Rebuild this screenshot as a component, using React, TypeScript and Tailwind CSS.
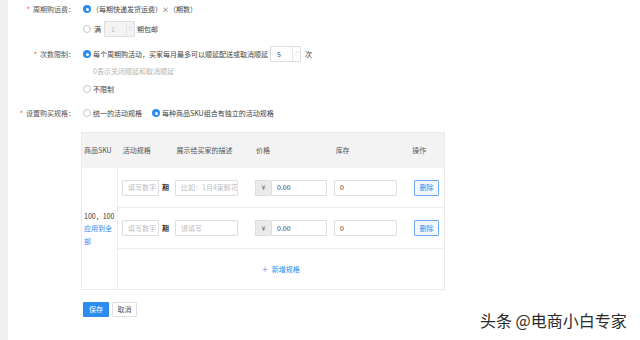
import React from 'react';

const FONT = "font-['Noto_Sans_CJK_SC','Noto_Sans',sans-serif]";

const Radio: React.FC<{ checked?: boolean }> = ({ checked }) =>
    checked ? (
        <span className="w-[8px] h-[8px] rounded-full bg-[#2d8cf0] flex items-center justify-center shrink-0">
            <span className="w-[3px] h-[3px] rounded-full bg-white" />
        </span>
    ) : (
        <span className="w-[8px] h-[8px] rounded-full border border-[#c8c8c8] bg-white shrink-0" />
    );

const NumberInput: React.FC<{ value: string; disabled?: boolean }> = ({ value, disabled }) => (
    <div className={`w-[31px] h-[16px] border border-[#dcdee2] rounded-[1px] flex items-stretch ${disabled ? 'bg-[#f3f3f3]' : 'bg-white'}`}>
        <span className={`flex-1 pl-[6px] flex items-center ${disabled ? 'text-[#bbb]' : 'text-[#444]'}`}>{value}</span>
        <span className="w-[8px] border-l border-[#e6e6e6] flex flex-col items-center justify-center text-[#bbb] leading-none">
            <span className="text-[4px] leading-[5px]">︿</span>
            <span className="text-[4px] leading-[5px]">﹀</span>
        </span>
    </div>
);

const TextInput: React.FC<{ w: string; placeholder?: string; value?: string }> = ({ w, placeholder, value }) => (
    <div className={`${w} h-[16px] border border-[#dcdee2] rounded-[1px] bg-white flex items-center px-[5px] overflow-hidden whitespace-nowrap`}>
        {value ? <span className="text-[#333]">{value}</span> : <span className="text-[#bdbdbd]">{placeholder}</span>}
    </div>
);

const Label: React.FC<{ text?: string }> = ({ text }) => (
    <div className="w-[73px] pr-[6px] flex justify-end items-center shrink-0 text-[#555]">
        {text && (
            <>
                <span className="text-[#ed4014] mr-[3px]">*</span>
                {text}：
            </>
        )}
    </div>
);

const SpecRow: React.FC<{ desc: string; last?: boolean }> = ({ desc, last }) => (
    <div className={`flex items-center ${last ? 'h-[41px] border-b border-[#ececec]' : 'h-[40px] border-b border-[#ececec]'}`}>
        <div className="w-[54px] pl-[4px] flex items-center gap-[3px]">
            <TextInput w="w-[37px]" placeholder="填写数字" />
            <span className="font-bold text-[#333]">期</span>
        </div>
        <div className="w-[80px] pl-[3px]">
            <TextInput w="w-[63px]" placeholder={desc} />
        </div>
        <div className="w-[80px] pl-[3px] flex">
            <span className="w-[16px] h-[16px] bg-[#ebebeb] border border-[#dcdee2] border-r-0 flex items-center justify-center text-[#666]">¥</span>
            <TextInput w="w-[56px]" value="0.00" />
        </div>
        <div className="w-[78px] pl-[2px]">
            <TextInput w="w-[63px]" value="0" />
        </div>
        <div className="w-[34px] pl-[4px]">
            <button className="w-[25px] h-[16px] border border-[#6fa8f5] bg-[#f4f9ff] text-[#2d8cf0] rounded-[1px] flex items-center justify-center">删除</button>
        </div>
    </div>
);

export default function App() {
    return (
        <div className={`relative flex w-[640px] h-[340px] bg-white text-[7px] leading-none ${FONT}`}>
            <div className="w-[8px] h-full bg-[#eff0f2]" />
            <div className="flex-1 flex flex-col pt-[1px]">
                <div className="flex h-[16px] items-center">
                    <Label text="周期购运费" />
                    <div className="flex items-center gap-[1px] pl-[2px] text-[#444]">
                        <Radio checked />
                        <span>（每期快递发货运费）×（期数）</span>
                    </div>
                </div>
                <div className="flex h-[16px] items-center mt-[4px]">
                    <Label />
                    <div className="flex items-center pl-[2px] text-[#444]">
                        <Radio />
                        <span className="ml-[3px] mr-[3px]">满</span>
                        <NumberInput value="1" disabled />
                        <span className="ml-[2px]">期包邮</span>
                    </div>
                </div>
                <div className="flex h-[16px] items-center mt-[9px]">
                    <Label text="次数限制" />
                    <div className="flex items-center pl-[2px] text-[#444]">
                        <Radio checked />
                        <span className="ml-[2px] mr-[2px]">每个周期购活动，买家每月最多可以顺延配送或取消顺延</span>
                        <NumberInput value="5" />
                        <span className="ml-[4px]">次</span>
                    </div>
                </div>
                <div className="flex h-[12px] items-center mt-[3px]">
                    <Label />
                    <span className="pl-[12px] text-[#b4b4b4]">0表示关闭顺延和取消顺延</span>
                </div>
                <div className="flex h-[12px] items-center mt-[6px]">
                    <Label />
                    <div className="flex items-center gap-[2px] pl-[2px] text-[#444]">
                        <Radio />
                        <span>不限制</span>
                    </div>
                </div>
                <div className="flex h-[16px] items-center mt-[10px]">
                    <Label text="设置购买规格" />
                    <div className="flex items-center pl-[2px] text-[#444]">
                        <Radio />
                        <span className="ml-[2px]">统一的活动规格</span>
                        <span className="ml-[10px]"><Radio checked /></span>
                        <span className="ml-[2px]">每种商品SKU组合有独立的活动规格</span>
                    </div>
                </div>

                <div className="ml-[73px] mt-[11px] w-[364px] border border-[#ebebeb] text-[#555]">
                    <div className="flex h-[35px] items-center bg-[#f3f3f3]">
                        <div className="w-[38px] pl-[2px]">商品SKU</div>
                        <div className="w-[54px] pl-[3px]">活动规格</div>
                        <div className="w-[80px] pl-[3px]">展示给买家的描述</div>
                        <div className="w-[80px] pl-[3px]">价格</div>
                        <div className="w-[78px] pl-[3px]">库存</div>
                        <div className="w-[34px] pl-[2px]">操作</div>
                    </div>
                    <div className="flex">
                        <div className="w-[38px] border-r border-[#ececec] pl-[2px] flex flex-col justify-center leading-[12.5px]">
                            <span className="text-[#333]">100，100</span>
                            <span className="text-[#2d8cf0] w-[30px]">应用到全部</span>
                        </div>
                        <div className="flex-1 flex flex-col">
                            <SpecRow desc="比如：1月4束鲜花" />
                            <SpecRow desc="请填写" last />
                            <div className="h-[40px] flex items-center justify-center text-[#2d8cf0] gap-[4px]">
                                <span className="text-[10px] font-light">+</span>
                                <span>新增规格</span>
                            </div>
                        </div>
                    </div>
                </div>

                <div className="ml-[75px] mt-[12px] flex gap-[3px]">
                    <button className="w-[26px] h-[15px] bg-[#2d8cf0] text-white rounded-[1px] flex items-center justify-center">保存</button>
                    <button className="w-[25px] h-[15px] bg-white border border-[#dcdee2] text-[#555] rounded-[1px] flex items-center justify-center">取消</button>
                </div>
            </div>
            <div className="absolute left-[480px] top-[312px] text-[16px] leading-none text-[#2a2a2a] [text-shadow:1px_1px_0_#fff,-1px_-1px_0_#fff,1px_-1px_0_#fff,-1px_1px_0_#fff]">
                头条 @电商小白专家
            </div>
        </div>
    );
}
